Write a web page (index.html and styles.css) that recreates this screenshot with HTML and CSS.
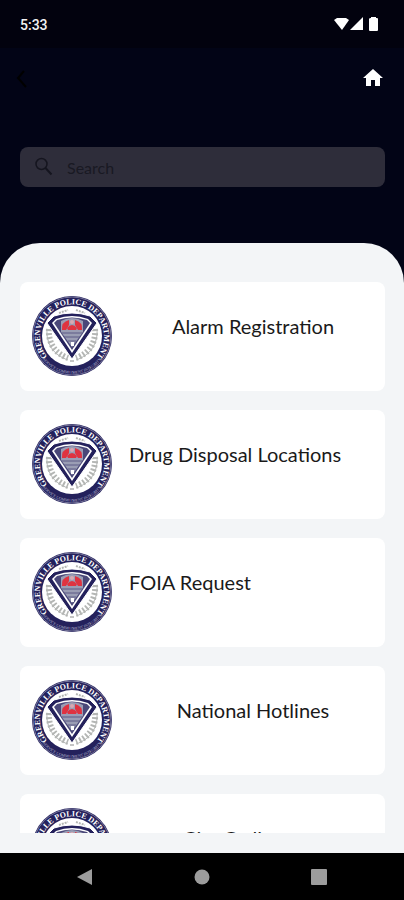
FILE: index.html
```html
<!doctype html>
<html lang="en">
<head>
	<meta charset="utf-8">
	<meta name="viewport" content="width=device-width, initial-scale=1">
	<title>Services</title>
	<link rel="stylesheet" href="styles.css">
</head>
<body>
<svg class="defs" aria-hidden="true">
	<symbol id="seal" viewBox="0 0 80 80">
		<circle cx="40" cy="40" r="40" fill="#24215c"/>
		<circle cx="40" cy="40" r="39" fill="none" stroke="#77769c" stroke-width="1"/>
		<circle cx="40" cy="40" r="30" fill="#fff"/>
		<path id="arcTop" d="M14 59A32 32 0 1 1 66 59" fill="none"/>
		<path id="arcBottom" d="M9 61A37 37 0 0 0 71 61" fill="none"/>
		<text class="seal-top"><textPath href="#arcTop" startOffset="50%">GREENVILLE POLICE DEPARTMENT</textPath></text>
		<text class="seal-bottom"><textPath href="#arcBottom" startOffset="50%">SERVICE COMMITMENT INTEGRITY</textPath></text>
		<g fill="none" stroke="#b4b6b4">
			<path d="M15 33C14 47 21 59 36 64M65 33C66 47 59 59 44 64" stroke-width="1"/>
			<path d="M17 33C16 46 22 57 36 62M63 33C64 46 58 57 44 62" stroke-width="6" stroke-dasharray="2 2"/>
			<path d="M27 17L36 14M44 14L53 17" stroke-width="2" stroke-dasharray="2 1"/>
		</g>
		<path d="M15 27L22 20Q40 14 58 20L65 27L40 63Z" fill="#24215c" stroke="#fff" stroke-width="1"/>
		<path d="M20 27L24 23Q40 17 56 23L60 27L40 57Z" fill="#fff"/>
		<path d="M22 27L25 24Q40 19 55 24L58 27L40 54Z" fill="#4a4879"/>
		<path d="M29 25Q40 19 51 25L51 36L40 51L29 36Z" fill="#9a9db4"/>
		<path d="M30 34Q29 26 37 24L37 29L34 34ZM50 34Q51 26 43 24L43 29L46 34Z" fill="#df3340"/>
		<path d="M35 32Q40 26 45 32L44 34H36Z" fill="#df3340"/>
		<circle cx="40" cy="26" r="2" fill="#d9a8b2"/>
		<path d="M29 37H51M32 41H48M36 45H44" stroke="#5c5a86" stroke-width="1"/>
		<path d="M39 46H42V50H39Z" fill="#fff"/>
		<path d="M38 65H42" stroke="#888" stroke-width="1"/>
	</symbol>
</svg>
<div class="screen">
	<div class="status">
		<span class="time">5:33</span>
		<svg width="46" height="16" viewBox="0 0 46 16" fill="#fff" aria-hidden="true">
			<path d="M0 4L3 2H12L15 4L8 14Z"/>
			<path d="M16 14L29 1V14Z"/>
			<path d="M37 1H42V2H43Q44 2 44 3V14Q44 15 43 15H36Q35 15 35 14V3Q35 2 37 2Z"/>
		</svg>
	</div>
	<header class="topbar">
		<button class="icon-btn" aria-label="Back">
			<svg width="24" height="24" viewBox="0 0 24 24"><path d="M14 5L8 12L16 21" fill="none" stroke="#000" stroke-width="2"/></svg>
		</button>
		<button class="icon-btn" aria-label="Home">
			<svg width="24" height="24" viewBox="0 0 24 24"><path d="M10 20V14H14V20H19V12H22L12 3L2 12H5V20Z" fill="#fff"/></svg>
		</button>
	</header>
	<label class="search">
		<svg width="24" height="24" viewBox="0 0 24 24" fill="none" stroke="#15151f" stroke-width="1.5" aria-hidden="true"><circle cx="7.5" cy="9" r="5.5"/><path d="M11.500 13L17.500 19.500" stroke-width="2"/></svg>
		<input type="search" placeholder="Search" aria-label="Search">
	</label>
	<main class="sheet">
		<ul class="list">
			<li><a class="card" href="#"><svg class="seal"><use href="#seal"/></svg><span class="name center">Alarm Registration</span></a></li>
			<li><a class="card" href="#"><svg class="seal"><use href="#seal"/></svg><span class="name">Drug Disposal Locations</span></a></li>
			<li><a class="card" href="#"><svg class="seal"><use href="#seal"/></svg><span class="name">FOIA Request</span></a></li>
			<li><a class="card" href="#"><svg class="seal"><use href="#seal"/></svg><span class="name center">National Hotlines</span></a></li>
			<li><a class="card" href="#"><svg class="seal"><use href="#seal"/></svg><span class="name center">City Ordinances</span></a></li>
		</ul>
	</main>
	<nav class="navbar">
		<button class="icon-btn" aria-label="Back"><svg width="24" height="24" viewBox="0 0 24 24"><path d="M19 4V20L4 12Z" fill="#9c9c9c"/></svg></button>
		<button class="icon-btn" aria-label="Home"><svg width="24" height="24" viewBox="0 0 24 24"><circle cx="12" cy="12" r="7.5" fill="#9c9c9c"/></svg></button>
		<button class="icon-btn" aria-label="Recent apps"><svg width="24" height="24" viewBox="0 0 24 24"><rect x="4" y="4" width="16" height="16" rx="1" fill="#9c9c9c"/></svg></button>
	</nav>
</div>
</body>
</html>
```
FILE: styles.css
```css
*{margin: 0;padding: 0;box-sizing: border-box;list-style: none;}
body,html{height: 100%;}
body{
	font-family: Lato, Carlito, "Liberation Sans", sans-serif;
	background: #020416;
}
.defs{display: none;}
.screen{
	height: 100vh;overflow: hidden;
	display: flex;flex-direction: column;
}
.status{
	height: 48px;padding: 0 24px 0 20px;background: #02020e;
	display: flex;align-items: center;justify-content: space-between;
	flex-shrink: 0;
}
.time{
	padding-top: 2px;
	font: 500 14px/20px Roboto, sans-serif;color: #f2f2f2;
}
.topbar{
	height: 60px;padding: 0 19px 0 10px;
	display: flex;align-items: center;justify-content: space-between;
	flex-shrink: 0;
}
.icon-btn{
	width: 24px;height: 24px;border: 0;background: none;
	cursor: pointer;
}
.icon-btn svg{display: block;}
.search{
	height: 40px;margin: 39px 19px 56px 20px;padding: 0 14px;
	background: #2e2d3a;border-radius: 8px;
	display: flex;align-items: center;gap: 9px;
	flex-shrink: 0;
}
.search input{
	flex: 1;min-width: 0;padding-top: 2px;border: 0;outline: 0;background: none;
	font: 16px/24px Lato, sans-serif;color: #15151f;
}
.search input::placeholder{color: #191923;opacity: 1;}
.sheet{
	flex: 1;min-height: 0;padding: 39px 19px 20px 20px;
	background: #f3f5f7;border-radius: 40px 40px 0 0;
	display: flex;
}
.list{
	flex: 1;overflow: hidden;
	display: flex;flex-direction: column;gap: 19px;
}
.card{
	height: 109px;padding: 14px 8px 14px 12px;
	background: #fff;border-radius: 8px;
	display: flex;gap: 17px;
	color: #1a1a1a;text-decoration: none;
}
.seal{
	width: 80px;height: 80px;flex-shrink: 0;
}
.seal-top,.seal-bottom{
	fill: #fff;text-anchor: middle;
	font-family: "Liberation Serif", serif;
}
.seal-top{font-size: 8px;font-weight: bold;}
.seal-bottom{font-size: 4px;fill: #b9b9cf;}
.name{
	flex: 1;padding-top: 18px;
	font-size: 20px;line-height: 24px;
}
.center{text-align: center;}
.navbar{
	height: 47px;padding: 0 73px;background: #000;
	display: flex;align-items: center;justify-content: space-between;
	flex-shrink: 0;
}
```
